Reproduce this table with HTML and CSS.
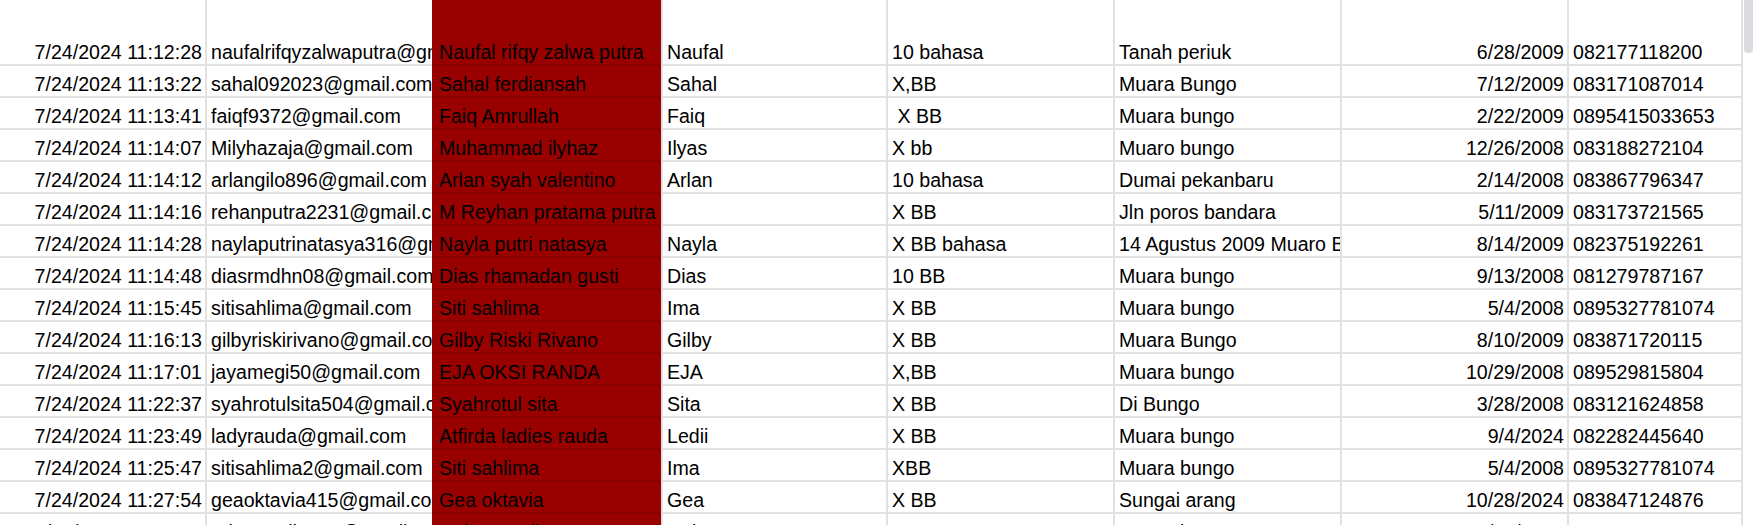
FILE: index.html
```html
<!DOCTYPE html>
<html>
<head>
<meta charset="utf-8">
<link rel="stylesheet" href="styles.css">
</head>
<body>
<div class="screen">
  <div class="sheet">
    <div class="grid" id="grid">
      <div class="c r">7/24/2024 11:12:28</div><div class="c">naufalrifqyzalwaputra@gmail.com</div><div class="c red">Naufal rifqy zalwa putra</div><div class="c">Naufal</div><div class="c">10 bahasa</div><div class="c">Tanah periuk</div><div class="c r">6/28/2009</div><div class="c last">082177118200</div>
      <div class="c r">7/24/2024 11:13:22</div><div class="c">sahal092023@gmail.com</div><div class="c red">Sahal ferdiansah</div><div class="c">Sahal</div><div class="c">X,BB</div><div class="c">Muara Bungo</div><div class="c r">7/12/2009</div><div class="c last">083171087014</div>
      <div class="c r">7/24/2024 11:13:41</div><div class="c">faiqf9372@gmail.com</div><div class="c red">Faiq Amrullah</div><div class="c">Faiq</div><div class="c">&nbsp;X BB</div><div class="c">Muara bungo</div><div class="c r">2/22/2009</div><div class="c last">0895415033653</div>
      <div class="c r">7/24/2024 11:14:07</div><div class="c">Milyhazaja@gmail.com</div><div class="c red">Muhammad ilyhaz</div><div class="c">Ilyas</div><div class="c">X bb</div><div class="c">Muaro bungo</div><div class="c r">12/26/2008</div><div class="c last">083188272104</div>
      <div class="c r">7/24/2024 11:14:12</div><div class="c">arlangilo896@gmail.com</div><div class="c red">Arlan syah valentino</div><div class="c">Arlan</div><div class="c">10 bahasa</div><div class="c">Dumai pekanbaru</div><div class="c r">2/14/2008</div><div class="c last">083867796347</div>
      <div class="c r">7/24/2024 11:14:16</div><div class="c">rehanputra2231@gmail.com</div><div class="c red">M Reyhan pratama putra</div><div class="c"></div><div class="c">X BB</div><div class="c">Jln poros bandara</div><div class="c r">5/11/2009</div><div class="c last">083173721565</div>
      <div class="c r">7/24/2024 11:14:28</div><div class="c">naylaputrinatasya316@gmail.com</div><div class="c red">Nayla putri natasya</div><div class="c">Nayla</div><div class="c">X BB bahasa</div><div class="c">14 Agustus 2009 Muaro Bungo</div><div class="c r">8/14/2009</div><div class="c last">082375192261</div>
      <div class="c r">7/24/2024 11:14:48</div><div class="c">diasrmdhn08@gmail.com</div><div class="c red">Dias rhamadan gusti</div><div class="c">Dias</div><div class="c">10 BB</div><div class="c">Muara bungo</div><div class="c r">9/13/2008</div><div class="c last">081279787167</div>
      <div class="c r">7/24/2024 11:15:45</div><div class="c">sitisahlima@gmail.com</div><div class="c red">Siti sahlima</div><div class="c">Ima</div><div class="c">X BB</div><div class="c">Muara bungo</div><div class="c r">5/4/2008</div><div class="c last">0895327781074</div>
      <div class="c r">7/24/2024 11:16:13</div><div class="c">gilbyriskirivano@gmail.com</div><div class="c red">Gilby Riski Rivano</div><div class="c">Gilby</div><div class="c">X BB</div><div class="c">Muara Bungo</div><div class="c r">8/10/2009</div><div class="c last">083871720115</div>
      <div class="c r">7/24/2024 11:17:01</div><div class="c">jayamegi50@gmail.com</div><div class="c red">EJA OKSI RANDA</div><div class="c">EJA</div><div class="c">X,BB</div><div class="c">Muara bungo</div><div class="c r">10/29/2008</div><div class="c last">089529815804</div>
      <div class="c r">7/24/2024 11:22:37</div><div class="c">syahrotulsita504@gmail.com</div><div class="c red">Syahrotul sita</div><div class="c">Sita</div><div class="c">X BB</div><div class="c">Di Bungo</div><div class="c r">3/28/2008</div><div class="c last">083121624858</div>
      <div class="c r">7/24/2024 11:23:49</div><div class="c">ladyrauda@gmail.com</div><div class="c red">Atfirda ladies rauda</div><div class="c">Ledii</div><div class="c">X BB</div><div class="c">Muara bungo</div><div class="c r">9/4/2024</div><div class="c last">082282445640</div>
      <div class="c r">7/24/2024 11:25:47</div><div class="c">sitisahlima2@gmail.com</div><div class="c red">Siti sahlima</div><div class="c">Ima</div><div class="c">XBB</div><div class="c">Muara bungo</div><div class="c r">5/4/2008</div><div class="c last">0895327781074</div>
      <div class="c r">7/24/2024 11:27:54</div><div class="c">geaoktavia415@gmail.com</div><div class="c red">Gea oktavia</div><div class="c">Gea</div><div class="c">X BB</div><div class="c">Sungai arang</div><div class="c r">10/28/2024</div><div class="c last">083847124876</div>
      <div class="c r">7/24/2024 11:29:09</div><div class="c">rahmaaulia505@gmail.com</div><div class="c red">Rahma Aulia</div><div class="c">Rahma</div><div class="c">10 IPS 2UB</div><div class="c">Muara bungo</div><div class="c r">3/29/2009</div><div class="c last">085215845519</div>
    </div>
  </div>
  <div class="vscroll"><div class="thumb"></div></div>
</div>
</body>
</html>
```

FILE: styles.css
```css
html, body {
  margin: 0;
  padding: 0;
  background: #ffffff;
  overflow: hidden;
}

.screen {
  display: flex;
  width: 1753px;
  height: 525px;
  overflow: hidden;
}

.sheet {
  width: 1743px;
  height: 525px;
  overflow: hidden;
}

.grid {
  display: grid;
  grid-template-columns: 205px 227px 229px 225px 227px 227px 227px 176px;
  grid-template-rows: 66px repeat(15, 32px) 32px;
  font-family: "Liberation Sans", Arial, sans-serif;
  font-size: 19.6px;
  line-height: 22px;
  color: #000000;
}

.c {
  display: flex;
  align-items: flex-end;
  box-sizing: border-box;
  padding: 0 4px 1px 4px;
  white-space: pre;
  overflow: hidden;
  border-left: 2px solid #e1e1e1;
  border-bottom: 2px solid #e1e1e1;
}

.c:nth-child(8n+1) {
  border-left: none;
}

.c.r {
  justify-content: flex-end;
  padding-right: 3px;
}

.c.red {
  background: #990000;
  border-left-color: #990000;
  border-bottom-color: #8a0000;
  padding-left: 5px;
}

.c.last {
  border-right: 2px solid #e1e1e1;
}

.vscroll {
  width: 10px;
  height: 525px;
  padding-left: 1px;
  box-sizing: border-box;
  background: #ffffff;
}

.thumb {
  width: 9px;
  height: 53px;
  background: #dadce0;
  border-radius: 0 0 4px 4px;
}
```
